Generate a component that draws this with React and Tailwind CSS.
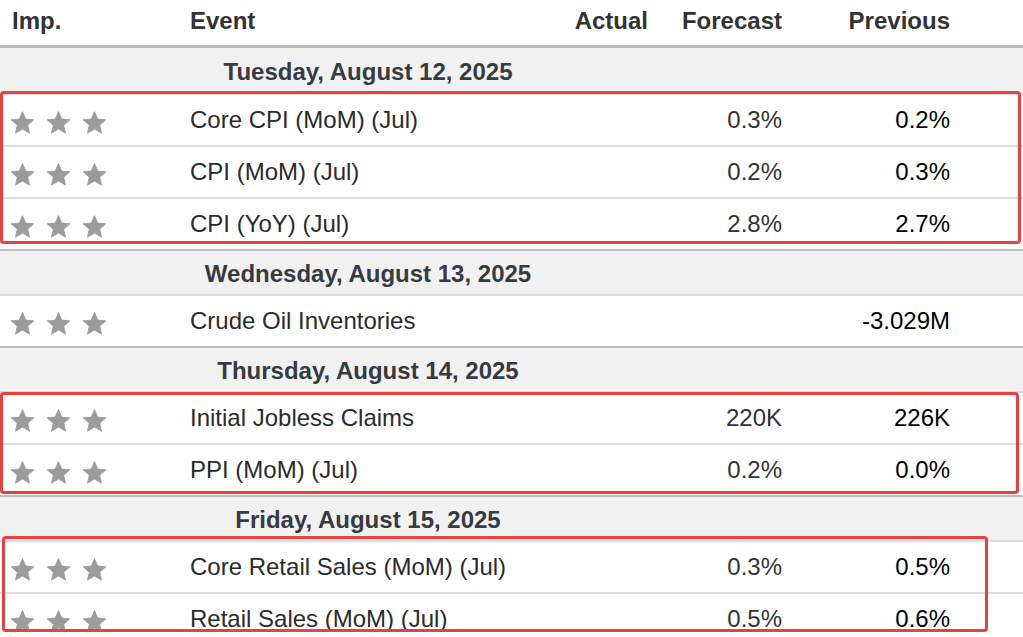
import React from "react";

const days = [
  {
    date: "Tuesday, August 12, 2025",
    box: "-top-[2px] bottom-[5px] left-0 right-[2px]",
    events: [
      { name: "Core CPI (MoM) (Jul)", forecast: "0.3%", previous: "0.2%" },
      { name: "CPI (MoM) (Jul)", forecast: "0.2%", previous: "0.3%" },
      { name: "CPI (YoY) (Jul)", forecast: "2.8%", previous: "2.7%" },
    ],
  },
  {
    date: "Wednesday, August 13, 2025",
    box: null,
    events: [{ name: "Crude Oil Inventories", forecast: "", previous: "-3.029M" }],
  },
  {
    date: "Thursday, August 14, 2025",
    box: "top-[1px] bottom-[1px] left-0 right-[4px]",
    events: [
      { name: "Initial Jobless Claims", forecast: "220K", previous: "226K" },
      { name: "PPI (MoM) (Jul)", forecast: "0.2%", previous: "0.0%" },
    ],
  },
  {
    date: "Friday, August 15, 2025",
    box: "-top-[4px] bottom-[12px] left-[2px] right-[35px]",
    events: [
      { name: "Core Retail Sales (MoM) (Jul)", forecast: "0.3%", previous: "0.5%" },
      { name: "Retail Sales (MoM) (Jul)", forecast: "0.5%", previous: "0.6%" },
    ],
  },
];

const cols = "grid grid-cols-[190px_330px_128px_134px_168px_1fr]";

function Star() {
  return (
    <svg width="25" height="23" viewBox="-0.5 -0.5 25 23" className="shrink-0">
      <path
        d="M12 0L15.23 7.55L23.41 8.29L17.23 13.7L19.05 21.71L12 17.5L4.95 21.71L6.77 13.7L0.59 8.29L8.77 7.55Z"
        fill="#9b9b9b"
        stroke="#9b9b9b"
        strokeWidth="0.8"
        strokeLinejoin="round"
      />
    </svg>
  );
}

function EventRow({ ev }) {
  return (
    <div className={`${cols} h-[52px] border-t-2 border-[#dcdcdc] bg-white items-center`}>
      <div className="flex items-center gap-[11px] pl-[10px] pt-[4px]">
        <Star />
        <Star />
        <Star />
      </div>
      <div className="text-[#2b2b2b]">{ev.name}</div>
      <div />
      <div className="text-right text-[#333]">{ev.forecast}</div>
      <div className="text-right text-black">{ev.previous}</div>
      <div />
    </div>
  );
}

export default function App() {
  return (
    <div className="w-[1023px] h-[637px] overflow-hidden bg-white font-['Liberation_Sans',Arial,sans-serif] text-[24px]">
      {/* header */}
      <div className={`${cols} h-[48px] pb-[3px] border-b-[3px] border-[#bbbbbb] items-center font-bold text-[#333]`}>
        <div className="pl-[12px]">Imp.</div>
        <div>Event</div>
        <div className="text-right">Actual</div>
        <div className="text-right">Forecast</div>
        <div className="text-right">Previous</div>
        <div />
      </div>

      {days.map((day, i) => (
        <div key={day.date}>
          <div
            className={`h-[45px] bg-[#f1f1f1] flex items-center pt-[3px] ${
              i === 0 ? "" : "border-t-2 border-[#bdbdbd]"
            }`}
          >
            <div className="w-[736px] text-center font-bold text-[#363b42]">{day.date}</div>
          </div>
          <div className="relative">
            {day.events.map((ev) => (
              <EventRow key={ev.name} ev={ev} />
            ))}
            {day.box && (
              <div
                className={`absolute ${day.box} border-[3px] border-[#e8413f] rounded-[4px] pointer-events-none`}
              />
            )}
          </div>
        </div>
      ))}
    </div>
  );
}
